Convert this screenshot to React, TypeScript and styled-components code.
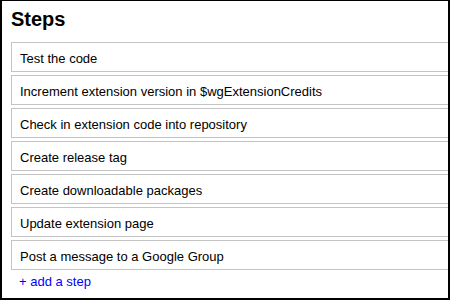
import * as React from "react";
import styled, { createGlobalStyle } from "styled-components";

const GlobalStyle = createGlobalStyle`
	html, body {
		margin: 0;
		padding: 0;
		background: #fff;
	}
`

const Frame = styled.div`
	box-sizing: border-box;
	width: 450px;
	height: 300px;
	overflow: hidden;
	border: 2px solid #000;
	border-top-width: 1px;
	padding: 7px 0 0 9px;
	font-family: "Liberation Sans", Arial, sans-serif;
	color: #000;
`

const Title = styled.h2`
	margin: 0 0 11px 0;
	font-size: 20px;
	line-height: 23px;
	font-weight: bold;
`

const StepList = styled.ol`
	list-style: none;
	margin: 0 -20px 0 0;
	padding: 0;
	display: flex;
	flex-direction: column;
	gap: 3px;
`

const Step = styled.li`
	box-sizing: border-box;
	height: 30px;
	border: 1px solid #c4c4c4;
	padding: 8px 8px 4px 8px;
	font-size: 13px;
	line-height: 16px;
	white-space: nowrap;
`

const AddLink = styled.a`
	display: inline-block;
	margin: 4px 0 0 8px;
	font-size: 13px;
	line-height: 16px;
	color: #0000ff;
	text-decoration: none;
	cursor: pointer;
`

const steps = [
	"Test the code",
	"Increment extension version in $wgExtensionCredits",
	"Check in extension code into repository",
	"Create release tag",
	"Create downloadable packages",
	"Update extension page",
	"Post a message to a Google Group",
];

export default function App() {
	return (
		<>
			<GlobalStyle />
			<Frame>
				<Title>Steps</Title>
				<StepList>
					{steps.map((s) => (
						<Step key={s}>{s}</Step>
					))}
				</StepList>
				<AddLink>+ add a step</AddLink>
			</Frame>
		</>
	)
}
